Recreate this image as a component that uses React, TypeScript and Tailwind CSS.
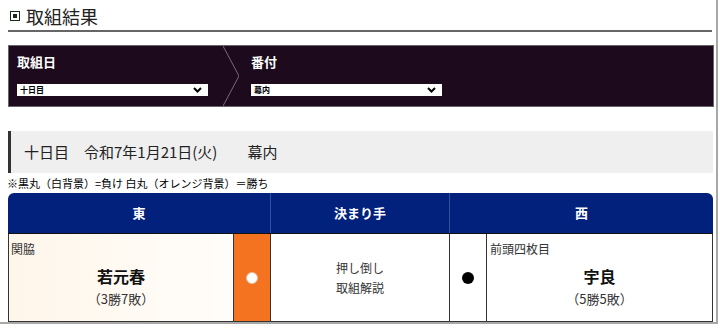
import React from "react";

const font = { fontFamily: '"Noto Sans CJK JP", "Noto Sans", sans-serif' };

function Select({ label, value }: { label: string; value: string }) {
  return (
    <div className="flex flex-col">
      <div className="h-[22px] text-[13px] font-bold leading-[22px] text-white">{label}</div>
      <div className="mt-[11px] flex h-[12px] w-[191px] items-center justify-between bg-white pl-[3px] pr-[6px]">
        <span className="text-[8px] font-bold leading-none text-black">{value}</span>
        <svg width="9" height="6" viewBox="0 0 9 6">
          <path d="M1 1 L4.5 4.5 L8 1" stroke="#000" strokeWidth="2" fill="none" />
        </svg>
      </div>
    </div>
  );
}

export default function App() {
  return (
    <div style={font} className="relative h-[328px] w-[720px] overflow-hidden bg-white text-[#222]">
      <div className="h-[324px] w-[718px] border-b-2 border-r-2 border-[#a8a8a8]">
        {/* title */}
        <div className="flex items-center pl-[10px] pt-[6px]">
          <div className="flex h-[10px] w-[10px] items-center justify-center border-[1.5px] border-[#1d2b1d]">
            <div className="h-[4px] w-[4px] bg-[#1d2b1d]" />
          </div>
          <div className="ml-[6px] text-[18px] leading-[20px] text-[#222]">取組結果</div>
        </div>
        <div className="ml-[8px] mt-[4px] h-[2px] w-[704px] bg-[#666]" />

        {/* panel */}
        <div className="relative ml-[8px] mt-[13px] flex h-[62px] w-[706px] border border-[#666] bg-[#1d0a1c]">
          <div className="w-[214px] pl-[8px] pt-[5px]">
            <Select label="取組日" value="十日目" />
          </div>
          <svg width="16" height="60" viewBox="0 0 16 60" className="shrink-0">
            <path d="M0 0 L16 30 L0 60" stroke="#7a6a7a" strokeWidth="1" fill="none" />
          </svg>
          <div className="pl-[12px] pt-[5px]">
            <Select label="番付" value="幕内" />
          </div>
        </div>

        {/* date bar */}
        <div className="ml-[8px] mt-[24px] flex h-[42px] w-[705px] items-center border-l-[3px] border-[#333] bg-[#efefef] pl-[13px] text-[15px] text-[#222]">
          十日目　令和7年1月21日(火)　　幕内
        </div>

        <div className="ml-[7px] mt-[3px] text-[11px] leading-[14px] text-black">
          ※黒丸（白背景）=負け 白丸（オレンジ背景）＝勝ち
        </div>

        {/* table */}
        <div className="ml-[8px] mt-[3px] w-[705px]">
          <div className="flex h-[41px] overflow-hidden rounded-t-[6px] border-b border-[#111] bg-[#01217c] text-[13px] font-bold text-white">
            <div className="flex w-[263px] items-center justify-center border-r border-[#3a4f9a]">東</div>
            <div className="flex w-[179px] items-center justify-center border-r border-[#3a4f9a]">決まり手</div>
            <div className="flex flex-1 items-center justify-center">西</div>
          </div>
          <div className="flex h-[88px] border-x border-b border-[#333]">
            <div className="relative w-[224px] bg-gradient-to-r from-[#fff6ea] to-[#fffdfa]">
              <div className="absolute left-[2px] top-[8px] text-[12px] leading-[14px] text-[#333]">関脇</div>
              <div className="flex h-full flex-col items-center pt-[32px]">
                <div className="text-[16px] font-bold leading-[20px] text-[#111]">若元春</div>
                <div className="mt-[5px] text-[13px] leading-[16px] text-[#333]">（3勝7敗）</div>
              </div>
            </div>
            <div className="flex w-[38px] items-center justify-center border-x border-[#333] bg-[#f47320]">
              <div className="h-[12px] w-[12px] rounded-full border border-[#e8c0a0] bg-white" />
            </div>
            <div className="flex w-[178px] flex-col items-center justify-center text-[12px] leading-[20px] text-[#333]">
              <div>押し倒し</div>
              <div>取組解説</div>
            </div>
            <div className="flex w-[38px] items-center justify-center border-x border-[#333] bg-white">
              <div className="h-[12px] w-[12px] rounded-full bg-black" />
            </div>
            <div className="relative flex-1 bg-white">
              <div className="absolute left-[3px] top-[8px] text-[12px] leading-[14px] text-[#333]">前頭四枚目</div>
              <div className="flex h-full flex-col items-center pt-[32px]">
                <div className="text-[16px] font-bold leading-[20px] text-[#111]">宇良</div>
                <div className="mt-[5px] text-[13px] leading-[16px] text-[#333]">（5勝5敗）</div>
              </div>
            </div>
          </div>
        </div>
      </div>
    </div>
  );
}
